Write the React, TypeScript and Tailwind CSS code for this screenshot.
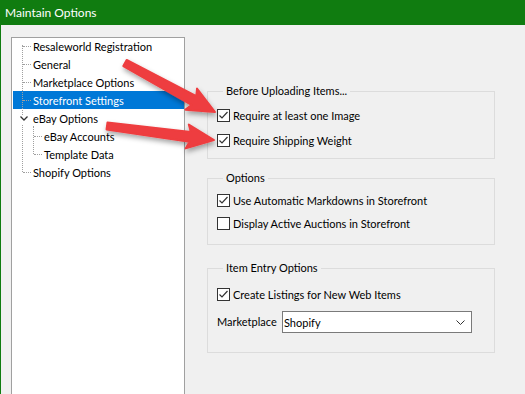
import React from 'react'

const font = { fontFamily: 'Lato, "Noto Sans", sans-serif' }

type Pt = [number, number]

// snagit-style arrow polygon from tail to tip
function arrowPoints(tail: Pt, tip: Pt, headLen = 24, headHalf = 12, tailHalf = 3.5, neckHalf = 5) {
  const dx = tip[0] - tail[0]
  const dy = tip[1] - tail[1]
  const len = Math.hypot(dx, dy)
  const ux = dx / len
  const uy = dy / len
  const nx = -uy
  const ny = ux
  const bx = tip[0] - ux * headLen
  const by = tip[1] - uy * headLen
  const pts: Pt[] = [
    [tail[0] + nx * tailHalf, tail[1] + ny * tailHalf],
    [bx + nx * neckHalf, by + ny * neckHalf],
    [bx - ux * 3 + nx * headHalf, by - uy * 3 + ny * headHalf],
    tip,
    [bx - ux * 3 - nx * headHalf, by - uy * 3 - ny * headHalf],
    [bx - nx * neckHalf, by - ny * neckHalf],
    [tail[0] - nx * tailHalf, tail[1] - ny * tailHalf],
  ]
  return pts.map((p) => p.join(',')).join(' ')
}

function Check({ checked }: { checked: boolean }) {
  return (
    <span className="w-[13px] h-[13px] border border-[#333] bg-white flex items-center justify-center shrink-0">
      {checked && (
        <svg width="11" height="11" viewBox="0 0 11 11">
          <path d="M1.5 5.5 L4 8 L9.5 2" fill="none" stroke="#333" strokeWidth="1.2" />
        </svg>
      )}
    </span>
  )
}

function CheckRow({ checked, label, className = '' }: { checked: boolean; label: string; className?: string }) {
  return (
    <div className={`flex items-center gap-[3px] h-[16px] ${className}`}>
      <Check checked={checked} />
      <span className="text-[11px] text-black leading-none whitespace-nowrap">{label}</span>
    </div>
  )
}

function Group({ title, className = '', children }: { title: string; className?: string; children: React.ReactNode }) {
  return (
    <fieldset className={`w-[288px] border border-[#dcdcdc] pl-[9px] ${className}`}>
      <legend className="ml-[6px] px-[3px] text-[11px] leading-[16px] text-black">{title}</legend>
      {children}
    </fieldset>
  )
}

const dots = 'border-dotted border-[#a0a0a0]'

function TreeRow({ label, level = 0, selected = false, chevron = false }: { label: string; level?: number; selected?: boolean; chevron?: boolean }) {
  return (
    <div className={`h-[18px] flex items-center ${selected ? 'bg-[#0078d7] text-white' : 'text-black'}`}>
      {chevron ? (
        <>
          <span className="w-[7px]" />
          <svg width="8" height="5" viewBox="0 0 8 5" className="mr-[5px]">
            <path d="M0.5 0.5 L4 4 L7.5 0.5" fill="none" stroke="#333" strokeWidth="1.3" />
          </svg>
        </>
      ) : (
        <>
          <span className={level === 1 ? 'w-[21px]' : 'w-[10px]'} />
          <span className={`w-[8px] border-t ${dots} mr-[2px]`} />
        </>
      )}
      <span className="text-[11px] leading-none whitespace-nowrap">{label}</span>
    </div>
  )
}

export default function App() {
  return (
    <div className="relative w-[525px] h-[394px] overflow-hidden bg-[#f0f0f0] border-l border-[#107c10] flex flex-col" style={font}>
      <div className="h-[25px] bg-[#107c10] flex items-center pl-[4px] shrink-0">
        <span className="text-white text-[12px] leading-none">Maintain Options</span>
      </div>

      <div className="flex flex-1 min-h-0">
        {/* tree */}
        <div className="relative ml-[10px] mt-[12px] w-[174px] bg-white border border-[#a0a0a0] border-b-0 pl-[1px]">
          <div className="-mt-[1px]">
            <TreeRow label="Resaleworld Registration" />
            <TreeRow label="General" />
            <TreeRow label="Marketplace Options" />
            <TreeRow label="Storefront Settings" selected />
            <TreeRow label="eBay Options" chevron />
            <TreeRow label="eBay Accounts" level={1} />
            <TreeRow label="Template Data" level={1} />
            <TreeRow label="Shopify Options" />
          </div>
          <div className={`absolute left-[10px] top-[7px] h-[70px] border-l ${dots}`} />
          <div className={`absolute left-[10px] top-[87px] h-[47px] border-l ${dots}`} />
          <div className={`absolute left-[21px] top-[88px] h-[28px] border-l ${dots}`} />
        </div>

        {/* options */}
        <div className="ml-[22px] pt-[58px] flex flex-col">
          <Group title="Before Uploading Items..." className="h-[76px]">
            <CheckRow checked label="Require at least one Image" className="mt-[8px]" />
            <CheckRow checked label="Require Shipping Weight" className="mt-[9px]" />
          </Group>
          <Group title="Options" className="h-[75px] mt-[11px]">
            <CheckRow checked label="Use Automatic Markdowns in Storefront" className="mt-[6px]" />
            <CheckRow checked={false} label="Display Active Auctions in Storefront" className="mt-[7px]" />
          </Group>
          <Group title="Item Entry Options" className="h-[93px] mt-[15px]">
            <CheckRow checked label="Create Listings for New Web Items" className="mt-[10px]" />
            <div className="flex items-center mt-[9px]">
              <span className="text-[11px] text-black w-[65px]">Marketplace</span>
              <div className="w-[190px] h-[22px] bg-white border border-[#7a7a7a] flex items-center justify-between pl-[1px] pr-[6px]">
                <span className="text-[11px] text-black leading-none">Shopify</span>
                <svg width="9" height="5" viewBox="0 0 9 5">
                  <path d="M0.5 0.5 L4.5 4.5 L8.5 0.5" fill="none" stroke="#333" strokeWidth="1" />
                </svg>
              </div>
            </div>
          </Group>
        </div>
      </div>

      {/* callout arrows */}
      <svg className="absolute left-0 top-0 pointer-events-none" width="525" height="394">
        <defs>
          <filter id="sh" x="-20%" y="-20%" width="140%" height="160%">
            <feDropShadow dx="1" dy="3" stdDeviation="2.5" floodColor="#000" floodOpacity="0.35" />
          </filter>
        </defs>
        <g filter="url(#sh)" fill="#ee3d3f" stroke="#ee3d3f" strokeWidth="2" strokeLinejoin="round">
          <polygon points={arrowPoints([124, 63], [214, 112])} />
          <polygon points={arrowPoints([106, 126], [213, 140])} />
        </g>
      </svg>
    </div>
  )
}
